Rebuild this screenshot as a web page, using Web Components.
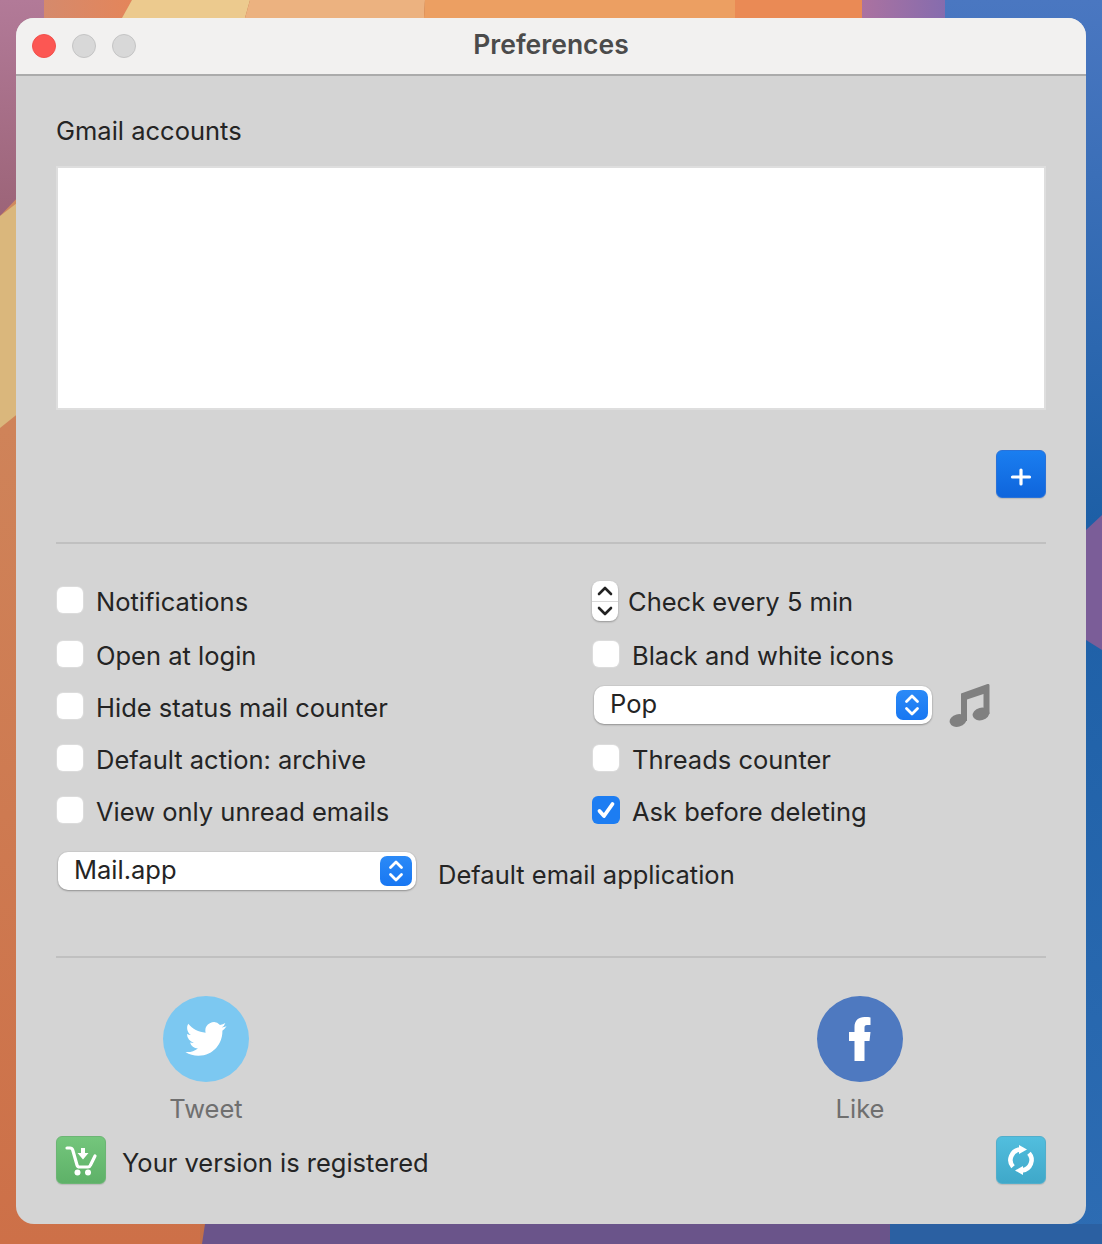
<!DOCTYPE html>
<html>
<head>
<meta charset="utf-8">
<title>Preferences</title>
<style>
  html, body { margin: 0; height: 100%; }
  body {
    position: relative;
    height: 1244px;
    overflow: hidden;
    box-sizing: border-box;
    padding: 18px 16px;
    font: 25.5px Inter, "Liberation Sans", sans-serif;
    color: #242424;
    background: #b0603c;
  }
</style>
</head>
<body>
<wall-paper></wall-paper>
<mac-window heading="Preferences">
  <section-label>Gmail accounts</section-label>
  <account-list></account-list>
  <div style="display:flex;justify-content:flex-end;margin-top:40px">
    <tool-button kind="add"></tool-button>
  </div>
  <h-rule style="margin-top:44px"></h-rule>
  <option-grid style="margin-top:30px">
    <check-row>Notifications</check-row>
    <step-row>Check every 5 min</step-row>
    <check-row>Open at login</check-row>
    <check-row>Black and white icons</check-row>
    <check-row>Hide status mail counter</check-row>
    <sound-row style="margin-top:-4px"><pop-select width="338" style="margin-left:2px">Pop</pop-select></sound-row>
    <check-row>Default action: archive</check-row>
    <check-row>Threads counter</check-row>
    <check-row>View only unread emails</check-row>
    <check-row checked>Ask before deleting</check-row>
  </option-grid>
  <div style="display:flex;align-items:center;height:44px;margin-top:13px;padding-left:2px">
    <pop-select width="358">Mail.app</pop-select>
    <span style="margin-left:22px;position:relative;top:3px">Default email application</span>
  </div>
  <h-rule style="margin-top:63px"></h-rule>
  <div style="display:flex;margin-top:38px;padding-left:107px;gap:568px">
    <social-link kind="twitter" color="#7cc8f1">Tweet</social-link>
    <social-link kind="facebook" color="#4e79c0">Like</social-link>
  </div>
  <div style="display:flex;align-items:center;margin-top:10px">
    <tool-button kind="cart"></tool-button>
    <span style="margin-left:16px;flex:1;position:relative;top:2px">Your version is registered</span>
    <tool-button kind="sync"></tool-button>
  </div>
</mac-window>

<script>
class WallPaper extends HTMLElement {
  connectedCallback() {
    this.attachShadow({mode: 'open'}).innerHTML = `
      <style>
        :host { position: absolute; inset: 0; display: block; }
        svg { display: block; }
      </style>
      <svg width="1102" height="1244" viewBox="0 0 1102 1244">
        <defs>
          <linearGradient id="low" x1="0" x2="1" y1="0" y2="0">
            <stop offset="0" stop-color="#d47a55"/><stop offset="0.35" stop-color="#b0673f"/><stop offset="1" stop-color="#b8683f"/>
          </linearGradient>
          <linearGradient id="leftOrange" x1="0" x2="0" y1="0" y2="1">
            <stop offset="0" stop-color="#d08d62"/><stop offset="1" stop-color="#cd7048"/>
          </linearGradient>
          <linearGradient id="blue" x1="0" x2="0" y1="0" y2="1">
            <stop offset="0" stop-color="#4a77c1"/><stop offset="0.42" stop-color="#1d5fa6"/><stop offset="1" stop-color="#2d6cb3"/>
          </linearGradient>
          <linearGradient id="rose" x1="0" x2="0" y1="0" y2="1">
            <stop offset="0" stop-color="#b27a98"/><stop offset="1" stop-color="#9c6478"/>
          </linearGradient>
          <linearGradient id="topRose" x1="0" x2="1" y1="0" y2="0">
            <stop offset="0" stop-color="#d58a6c"/><stop offset="1" stop-color="#e4855a"/>
          </linearGradient>
          <linearGradient id="topPurple" x1="0" x2="1" y1="0" y2="0">
            <stop offset="0" stop-color="#ab72a0"/><stop offset="1" stop-color="#856cae"/>
          </linearGradient>
        </defs>
        <rect width="1102" height="1244" fill="url(#low)"/>
        <rect width="200" height="1244" fill="url(#leftOrange)"/>
        <polygon points="0,0 44,0 44,170 0,216" fill="url(#rose)"/>
        <polygon points="44,0 132,0 122,18 120,200 44,200" fill="url(#topRose)"/>
        <polygon points="0,216 60,170 60,380 0,428" fill="#dab77c"/>
        <polygon points="132,0 250,0 245,18 122,18" fill="#ecca8e"/>
        <polygon points="250,0 425,0 424,18 245,18" fill="#ecb280"/>
        <polygon points="425,0 735,0 735,18 424,18" fill="#ec9f62"/>
        <polygon points="735,0 862,0 866,18 735,18" fill="#ea8a55"/>
        <rect x="862" width="84" height="18" fill="url(#topPurple)"/>
        <rect x="945" width="157" height="1244" fill="url(#blue)"/>
        <polygon points="1086,530 1102,515 1102,650 1086,640" fill="#7b5d98"/>
        <polygon points="205,1224 890,1224 890,1244 202,1244" fill="#6a548a"/>
        <rect x="890" y="1224" width="212" height="20" fill="#2b60a2"/>
      </svg>
    `;
  }
}

class MacWindow extends HTMLElement {
  connectedCallback() {
    this.attachShadow({mode: 'open'}).innerHTML = `
      <style>
        :host {
          position: relative;
          display: flex;
          flex-direction: column;
          height: 1206px;
          border-radius: 18px;
          overflow: hidden;
          background: #d4d4d4;
        }
        header {
          height: 58px;
          flex: none;
          box-sizing: border-box;
          display: flex;
          align-items: center;
          padding-left: 16px;
          gap: 16px;
          background: #f2f1f0;
          border-bottom: 2px solid #ababab;
          position: relative;
        }
        i {
          width: 24px;
          height: 24px;
          box-sizing: border-box;
          border-radius: 50%;
          background: #d8d8d8;
          border: 1px solid #c4c4c4;
        }
        i.close { background: #fc5753; border-color: #f1504c; }
        h1 {
          position: absolute;
          left: 0;
          right: 0;
          top: 0;
          margin: 0;
          text-align: center;
          font-size: 26.5px;
          line-height: 53px;
          font-weight: 600;
          color: #4b4b4b;
        }
        main { flex: 1; padding: 38px 40px 0; }
      </style>
      <header>
        <i class="close"></i><i></i><i></i>
        <h1>${this.getAttribute('heading')}</h1>
      </header>
      <main><slot></slot></main>
    `;
  }
}

class SectionLabel extends HTMLElement {
  connectedCallback() {
    this.attachShadow({mode: 'open'}).innerHTML = `
      <style>:host { display: block; line-height: 34px; }</style>
      <slot></slot>
    `;
  }
}

class AccountList extends HTMLElement {
  connectedCallback() {
    this.attachShadow({mode: 'open'}).innerHTML = `
      <style>
        :host {
          display: block;
          box-sizing: border-box;
          height: 244px;
          margin-top: 18px;
          background: #fff;
          border: 2px solid #dedede;
        }
      </style>
    `;
  }
}

class HRule extends HTMLElement {
  connectedCallback() {
    this.attachShadow({mode: 'open'}).innerHTML = `
      <style>:host { display: block; height: 2px; background: #c0c0c0; }</style>
    `;
  }
}

const ICONS = {
  add: {
    bg: 'linear-gradient(#1a7ef0, #0f65dc)',
    edge: '#2a72d8',
    svg: `<svg width="50" height="48" viewBox="0 0 50 48"><path d="M25 20v14M16.500 27h17" stroke="#fff" stroke-width="3.200" stroke-linecap="round"/></svg>`
  },
  cart: {
    bg: 'linear-gradient(#74c67c, #5eb168)',
    edge: '#6cb574',
    svg: `<svg width="50" height="48" viewBox="0 0 50 48" fill="none">
      <path d="M11 12h3c1.500 0 2.300.8 2.800 2.200L21 29c.4 1.300 1.200 2 2.500 2H32c1.200 0 2-.6 2.400-1.700L39 20" stroke="#fff" stroke-width="3.200" stroke-linecap="round" stroke-linejoin="round"/>
      <path d="M25 12h4v5h3.500L27 23.500 21.500 17H25z" fill="#fff"/>
      <circle cx="21.500" cy="36.500" r="3" fill="#fff"/><circle cx="32" cy="36.500" r="3" fill="#fff"/>
    </svg>`
  },
  sync: {
    bg: 'linear-gradient(#52bede, #3fa8c9)',
    edge: '#52aecb',
    svg: `<svg width="30" height="34" viewBox="0 0 30 34" fill="none">
      <path d="M7 23.800A10.500 10.500 0 0 1 14 6.500" stroke="#fff" stroke-width="4.600"/>
      <path d="M13 2l8 4.500-8 4.500z" fill="#fff"/>
      <path d="M23 10.200A10.500 10.500 0 0 1 16 27.500" stroke="#fff" stroke-width="4.600"/>
      <path d="M17 32l-8-4.500 8-4.500z" fill="#fff"/>
    </svg>`
  }
};

class ToolButton extends HTMLElement {
  connectedCallback() {
    const icon = ICONS[this.getAttribute('kind')];
    this.attachShadow({mode: 'open'}).innerHTML = `
      <style>
        :host {
          display: flex;
          flex: none;
          align-items: center;
          justify-content: center;
          width: 50px;
          height: 48px;
          box-sizing: border-box;
          border-radius: 6px;
          border: 1px solid ${icon.edge};
          background: ${icon.bg};
          box-shadow: 0 1px 1px rgba(0,0,0,.12);
        }
        svg { display: block; flex: none; }
      </style>
      ${icon.svg}
    `;
  }
}

class OptionGrid extends HTMLElement {
  connectedCallback() {
    this.attachShadow({mode: 'open'}).innerHTML = `
      <style>
        :host {
          display: grid;
          grid-template-columns: 536px 1fr;
          grid-template-rows: 54px 54px 50px 54px 50px;
        }
      </style>
      <slot></slot>
    `;
  }
}

class CheckRow extends HTMLElement {
  connectedCallback() {
    const mark = this.hasAttribute('checked')
      ? `<svg width="20" height="20" viewBox="0 0 20 20"><path d="M3.500 11l4.500 5 8.500-12" fill="none" stroke="#fff" stroke-width="3.800" stroke-linecap="round" stroke-linejoin="round"/></svg>`
      : '';
    this.attachShadow({mode: 'open'}).innerHTML = `
      <style>
        :host { display: flex; align-items: center; }
        .box {
          flex: none;
          display: flex;
          align-items: center;
          justify-content: center;
          width: 26px;
          height: 26px;
          margin: -2px 13px 0 1px;
          box-sizing: border-box;
          border-radius: 6px;
          background: #fff;
          box-shadow: 0 0 0 1px #dcdcdc;
        }
        .box.on { background: #1d7df2; box-shadow: none; margin-left: 0; width: 28px; height: 28px; margin-right: 12px; }
      </style>
      <span class="box ${mark ? 'on' : ''}">${mark}</span>
      <slot></slot>
    `;
  }
}

class StepRow extends HTMLElement {
  connectedCallback() {
    this.attachShadow({mode: 'open'}).innerHTML = `
      <style>
        :host { display: flex; align-items: center; }
        .step {
          flex: none;
          display: flex;
          flex-direction: column;
          width: 26px;
          height: 40px;
          margin-right: 10px;
          border-radius: 8px;
          background: #fff;
          box-shadow: 0 1px 2px rgba(0,0,0,.3);
        }
        .step span { flex: 1; display: flex; align-items: center; justify-content: center; }
        .step span + span { border-top: 1px solid #d8d8d8; }
        svg { display: block; }
      </style>
      <span class="step">
        <span><svg width="16" height="10" viewBox="0 0 16 10"><path d="M2 8l6-6 6 6" fill="none" stroke="#222" stroke-width="2.600" stroke-linecap="round" stroke-linejoin="round"/></svg></span>
        <span><svg width="16" height="10" viewBox="0 0 16 10"><path d="M2 2l6 6 6-6" fill="none" stroke="#222" stroke-width="2.600" stroke-linecap="round" stroke-linejoin="round"/></svg></span>
      </span>
      <slot></slot>
    `;
  }
}

class SoundRow extends HTMLElement {
  connectedCallback() {
    this.attachShadow({mode: 'open'}).innerHTML = `
      <style>
        :host { display: flex; align-items: center; gap: 17px; }
        svg { display: block; flex: none; }
      </style>
      <slot></slot>
      <svg width="42" height="44" viewBox="0 0 42 44">
        <path d="M12 10.500 38.500 1c1-.3 2 .2 2 1.200V31h-6V11L18 16.500V38h-6z" fill="#808080"/>
        <ellipse cx="9" cy="37.500" rx="8.500" ry="6.200" transform="rotate(-14 9 37.500)" fill="#808080"/>
        <ellipse cx="32" cy="31" rx="8.500" ry="6.200" transform="rotate(-14 32 31)" fill="#808080"/>
      </svg>
    `;
  }
}

class PopSelect extends HTMLElement {
  connectedCallback() {
    this.attachShadow({mode: 'open'}).innerHTML = `
      <style>
        :host {
          display: flex;
          flex: none;
          align-items: center;
          box-sizing: border-box;
          width: ${this.getAttribute('width')}px;
          height: 38px;
          padding: 0 4px 0 16px;
          border-radius: 10px;
          background: #fff;
          box-shadow: 0 1px 2px rgba(0,0,0,.3), 0 0 0 1px rgba(0,0,0,.03);
        }
        .txt { flex: 1; margin-top: -3px; }
        .arrows {
          display: flex;
          align-items: center;
          justify-content: center;
          width: 32px;
          height: 30px;
          border-radius: 7px;
          background: linear-gradient(#2b8af7, #1877f2);
        }
        svg { display: block; }
      </style>
      <span class="txt"><slot></slot></span>
      <span class="arrows">
        <svg width="18" height="24" viewBox="0 0 18 24" fill="none" stroke="#fff" stroke-width="2.800" stroke-linecap="round" stroke-linejoin="round">
          <path d="M3.500 8.500 9 3l5.500 5.500M3.500 15.500 9 21l5.500-5.500"/>
        </svg>
      </span>
    `;
  }
}

const BRANDS = {
  twitter: `<svg width="42" height="36" viewBox="0 1.500 24 21"><path fill="#fff" d="M23.953 4.570a10 10 0 0 1-2.825.775 4.958 4.958 0 0 0 2.163-2.723c-.951.555-2.005.959-3.127 1.184a4.920 4.920 0 0 0-8.384 4.482C7.690 8.095 4.067 6.130 1.640 3.162a4.822 4.822 0 0 0-.666 2.475c0 1.710.870 3.213 2.188 4.096a4.904 4.904 0 0 1-2.228-.616v.060a4.923 4.923 0 0 0 3.946 4.827 4.996 4.996 0 0 1-2.212.085 4.936 4.936 0 0 0 4.604 3.417 9.867 9.867 0 0 1-6.102 2.105c-.390 0-.779-.023-1.170-.067a13.995 13.995 0 0 0 7.557 2.209c9.053 0 13.998-7.496 13.998-13.985 0-.210 0-.420-.015-.630A9.935 9.935 0 0 0 24 4.590z"/></svg>`,
  facebook: `<svg width="22" height="44" viewBox="0 0 22 44" style="margin-left:-1px"><path fill="#fff" d="M5.500 44V24H0v-9h5.500V10C5.500 3.500 9.500 0 15.500 0c2.500 0 5 .2 6 .4v7.600h-3.500c-2 0-2.500 1-2.500 2.800V15h6l-1 9h-5v20z"/></svg>`
};

class SocialLink extends HTMLElement {
  connectedCallback() {
    this.attachShadow({mode: 'open'}).innerHTML = `
      <style>
        :host {
          display: flex;
          flex-direction: column;
          align-items: center;
          width: 86px;
          color: #6f6f6f;
        }
        .disc {
          display: flex;
          align-items: center;
          justify-content: center;
          width: 86px;
          height: 86px;
          border-radius: 50%;
          background: ${this.getAttribute('color')};
        }
        .cap { margin-top: 10px; line-height: 34px; white-space: nowrap; }
      </style>
      <span class="disc">${BRANDS[this.getAttribute('kind')]}</span>
      <span class="cap"><slot></slot></span>
    `;
  }
}

customElements.define('wall-paper', WallPaper);
customElements.define('mac-window', MacWindow);
customElements.define('section-label', SectionLabel);
customElements.define('account-list', AccountList);
customElements.define('h-rule', HRule);
customElements.define('tool-button', ToolButton);
customElements.define('option-grid', OptionGrid);
customElements.define('check-row', CheckRow);
customElements.define('step-row', StepRow);
customElements.define('sound-row', SoundRow);
customElements.define('pop-select', PopSelect);
customElements.define('social-link', SocialLink);
</script>
</body>
</html>
